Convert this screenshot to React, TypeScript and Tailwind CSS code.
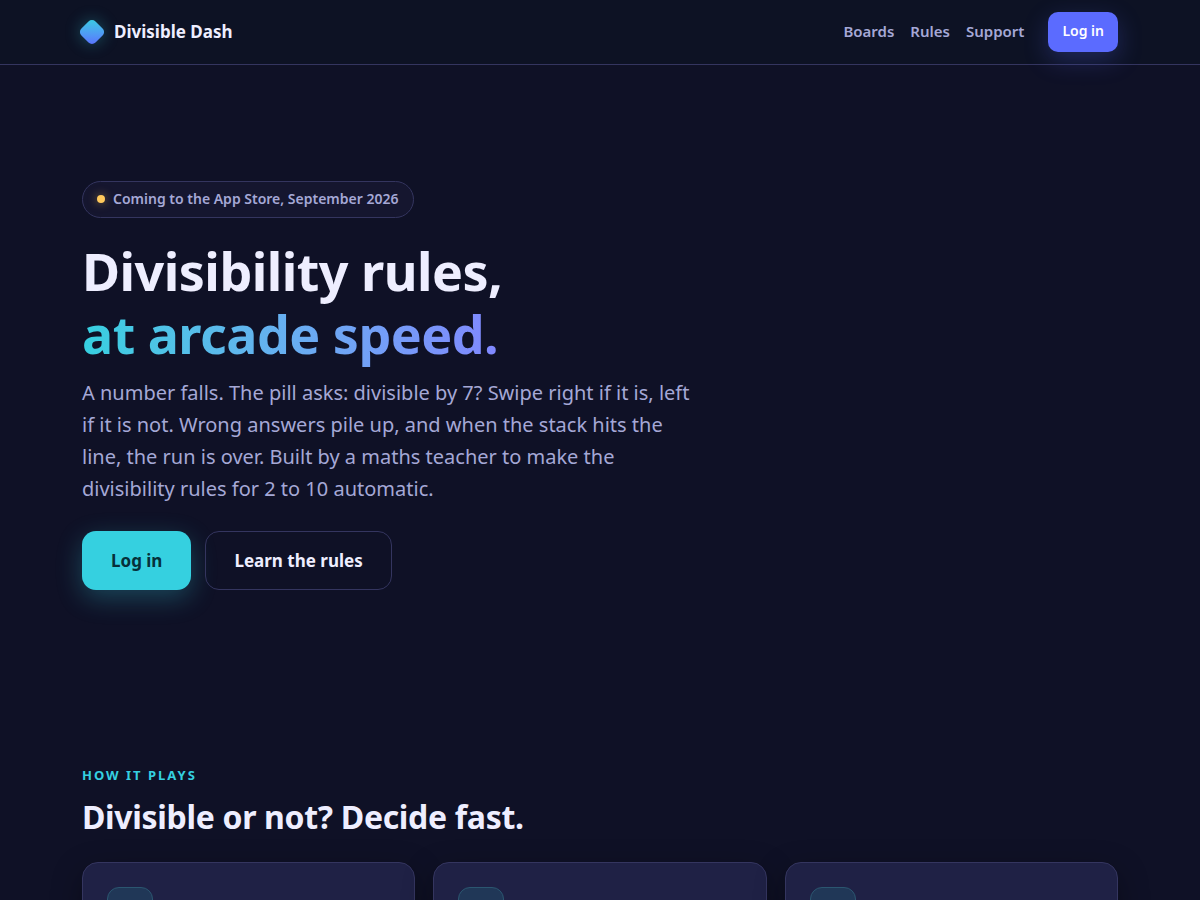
import React from "react";
import { clsx } from "clsx";

const links = [
  { label: "Boards", href: "#boards" },
  { label: "Rules", href: "#rules" },
  { label: "Support", href: "#support" },
];

const cards = ["fall", "swipe", "stack"];

const Container = ({
  className,
  children,
}: {
  className?: string;
  children: React.ReactNode;
}) => (
  <div className={clsx("mx-auto w-full max-w-[1080px] px-[22px]", className)}>
    {children}
  </div>
);

const Logo = () => (
  <a href="#" className="flex items-center gap-3 text-[17px] font-bold">
    <span className="h-5 w-5 rotate-45 rounded-[5px] bg-linear-135 from-[#35d0e0] to-[#5b6bff] shadow-[0_0_16px_rgba(53,208,224,0.35)]" />
    <span>Divisible Dash</span>
  </a>
);

const Header = () => (
  <header className="border-b border-[#34355f] bg-[#0d1224]">
    <Container className="flex h-16 items-center justify-between">
      <Logo />
      <nav className="flex items-center gap-4 text-[15px] leading-5 font-semibold text-[#a5a8d6]">
        {links.map((link) => (
          <a key={link.label} href={link.href} className="pb-0.5">
            {link.label}
          </a>
        ))}
        <button
          type="button"
          className="ml-2 h-10 rounded-[10px] bg-[#5b6bff] px-3.5 pb-0.5 text-sm font-semibold text-white shadow-[0_8px_24px_rgba(91,107,255,0.25)]"
        >
          Log in
        </button>
      </nav>
    </Container>
  </header>
);

const Hero = () => (
  <section className="pt-[116px] pb-[175px]">
    <Container>
      <p className="inline-flex h-[37px] items-center gap-2 rounded-full border border-[#34355f] bg-[#15162f] px-3.5 pb-px text-sm font-semibold text-[#a5a8d6]">
        <span className="h-2 w-2 rounded-full bg-[#ffc95c] shadow-[0_0_10px_rgba(255,201,77,0.5)]" />
        Coming to the App Store, September 2026
      </p>
      <h1 className="mt-[21px] text-[52px] leading-[63px] font-bold tracking-[-0.01em]">
        <span className="block">Divisibility rules,</span>
        <span className="block w-fit bg-linear-to-r from-[#35d0e0] to-[#8088ff] bg-clip-text pb-1 text-transparent">
          at arcade speed.
        </span>
      </h1>
      <p className="mt-2 max-w-[620px] text-xl leading-8 text-[#a5a8d6]">
        A number falls. The pill asks: divisible by 7? Swipe right if it is,
        left if it is not. Wrong answers pile up, and when the stack hits the
        line, the run is over. Built by a maths teacher to make the divisibility
        rules for 2 to 10 automatic.
      </p>
      <div className="mt-[26px] flex flex-wrap gap-3.5 text-[17px] font-bold">
        <button
          type="button"
          className="h-[59px] rounded-[14px] bg-[#35d0e0] px-[29px] text-[#06303a] shadow-[0_8px_26px_rgba(53,208,224,0.28)]"
        >
          Log in
        </button>
        <button
          type="button"
          className="h-[59px] rounded-[14px] border border-[#34355f] px-7"
        >
          Learn the rules
        </button>
      </div>
    </Container>
  </section>
);

const HowItPlays = () => (
  <section>
    <Container>
      <p className="text-[13px] leading-5 font-bold tracking-[2px] text-[#35d0e0] uppercase">
        How it plays
      </p>
      <h2 className="mt-3 text-[32px] leading-10 font-bold tracking-[-0.01em]">
        Divisible or not? Decide fast.
      </h2>
      <div className="mt-[25px] grid gap-[18px] md:grid-cols-3">
        {cards.map((card) => (
          <div
            key={card}
            className="rounded-2xl border border-[#34355f] bg-[#1f2145] p-6 shadow-[0_10px_30px_rgba(0,0,0,0.35)]"
          >
            <div className="h-[46px] w-[46px] rounded-xl border border-[#2b5670] bg-[#203757]" />
          </div>
        ))}
      </div>
    </Container>
  </section>
);

export default function App() {
  return (
    <div className="min-h-screen bg-[#0f1126] font-['Noto_Sans',sans-serif] text-[#eeeeff]">
      <Header />
      <main>
        <Hero />
        <HowItPlays />
      </main>
    </div>
  );
}
